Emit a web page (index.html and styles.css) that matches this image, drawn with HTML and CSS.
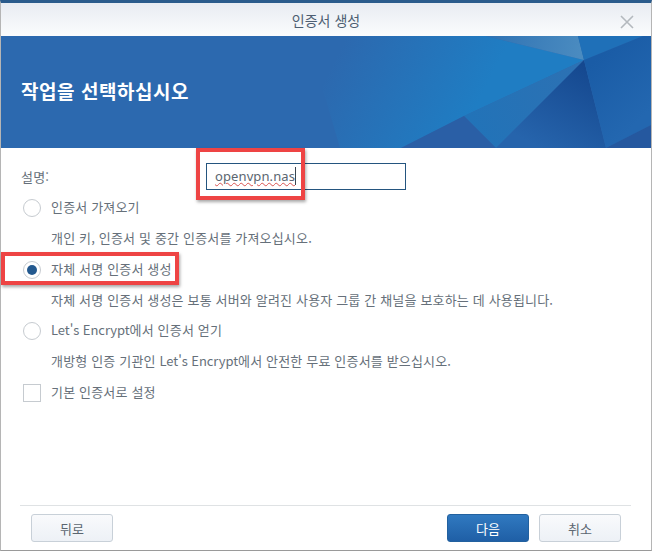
FILE: index.html
```html
<!DOCTYPE html>
<html lang="ko">
<head>
<meta charset="utf-8">
<title>인증서 생성</title>
<link rel="stylesheet" href="styles.css">
</head>
<body>
<div class="dialog">
  <header class="titlebar">
    <span class="title">인증서 생성</span>
    <svg class="close" width="14" height="14" viewBox="0 0 14 14"><path d="M1 1 L13 13 M13 1 L1 13" stroke="#b4b9be" stroke-width="1.6" fill="none"/></svg>
  </header>
  <section class="banner">
    <svg class="banner-art" width="650" height="112" viewBox="1 36 650 112" preserveAspectRatio="none">
      <defs>
        <linearGradient id="g1" gradientUnits="userSpaceOnUse" x1="340" y1="50" x2="470" y2="118"><stop offset="0" stop-color="#2c69af"/><stop offset="1" stop-color="#1f7dc3"/></linearGradient>
        <linearGradient id="g2" gradientUnits="userSpaceOnUse" x1="470" y1="120" x2="584" y2="60"><stop offset="0" stop-color="#2273b8"/><stop offset="1" stop-color="#2d71b3"/></linearGradient>
        <linearGradient id="g3" gradientUnits="userSpaceOnUse" x1="584" y1="65" x2="540" y2="148"><stop offset="0" stop-color="#15488f"/><stop offset="1" stop-color="#2664ac"/></linearGradient>
        <linearGradient id="g4" gradientUnits="userSpaceOnUse" x1="486" y1="36" x2="580" y2="50"><stop offset="0" stop-color="#2f72b3"/><stop offset="1" stop-color="#4a8bc0"/></linearGradient>
        <linearGradient id="g5" gradientUnits="userSpaceOnUse" x1="590" y1="65" x2="640" y2="120"><stop offset="0" stop-color="#1a5ca6"/><stop offset="1" stop-color="#2367b0"/></linearGradient>
      </defs>
      <rect x="0" y="36" width="651" height="112" fill="#2c69af"/>
      <polygon points="300,36 486,36 584,60 464,116 401,148 340,148 326,100" fill="url(#g1)"/>
      <polygon points="486,36 578,36 584,60" fill="url(#g4)"/>
      <polygon points="578,36 643,36 584,60" fill="#1f70b8"/>
      <polygon points="584,60 464,116 496,148" fill="url(#g2)"/>
      <polygon points="464,116 401,148 496,148" fill="#2a5fa6"/>
      <polygon points="584,60 496,148 606,148" fill="url(#g3)"/>
      <polygon points="584,60 643,36 651,36 651,125 606,148" fill="url(#g5)"/>
      <polygon points="651,125 606,148 651,148" fill="#25589f"/>
    </svg>
    <h1 class="banner-title">작업을 선택하십시오</h1>
  </section>
  <main class="content">
    <div class="row desc-row">
      <label class="desc-label">설명:</label>
      <div class="input"><span class="typed">openvpn.nas</span></div>
    </div>
    <div class="option opt-first"><span class="radio"></span><span class="opt-text">인증서 가져오기</span></div>
    <p class="hint">개인 키, 인증서 및 중간 인증서를 가져오십시오.</p>
    <div class="option"><span class="radio checked"></span><span class="opt-text">자체 서명 인증서 생성</span></div>
    <p class="hint">자체 서명 인증서 생성은 보통 서버와 알려진 사용자 그룹 간 채널을 보호하는 데 사용됩니다.</p>
    <div class="option"><span class="radio"></span><span class="opt-text"><span class="latin">Let's Encrypt</span>에서 인증서 얻기</span></div>
    <p class="hint">개방형 인증 기관인 <span class="latin">Let's Encrypt</span>에서 안전한 무료 인증서를 받으십시오.</p>
    <div class="option"><span class="check"></span><span class="opt-text">기본 인증서로 설정</span></div>
  </main>
  <footer class="footer">
    <button class="btn">뒤로</button>
    <span class="spacer"></span>
    <button class="btn primary">다음</button>
    <button class="btn">취소</button>
  </footer>
</div>
<div class="mark mark-input"></div>
<div class="mark mark-radio"></div>
</body>
</html>
```
FILE: styles.css
```css
* { box-sizing: border-box; }
html, body { margin: 0; padding: 0; background: #fff; }
body {
  width: 652px;
  height: 551px;
  position: relative;
  overflow: hidden;
  font-family: "Noto Sans CJK KR", "Noto Sans", sans-serif;
  color: #66707a;
}
.dialog {
  width: 652px;
  height: 551px;
  display: flex;
  flex-direction: column;
  border-top: 3px solid #2a5b8c;
  border-left: 1px solid #b5b5b5;
  border-right: 1px solid #b5b5b5;
  border-bottom: 1px solid #9a9a9a;
}
.titlebar {
  height: 33px;
  flex: none;
  display: flex;
  align-items: center;
  justify-content: center;
  position: relative;
  background: linear-gradient(#e8ecf2, #fbfcfd);
}
.title { font-size: 14px; color: #4d5e72; }
.close { position: absolute; right: 17px; top: 12px; }
.banner {
  height: 112px;
  flex: none;
  position: relative;
  display: flex;
  align-items: center;
  padding: 0 0 3px 20px;
  background: #2c69af;
}
.banner-art { position: absolute; left: 0; top: 0; }
.banner-title {
  position: relative;
  margin: 0;
  font-size: 19px;
  font-weight: 700;
  color: #fff;
  letter-spacing: .55px;
}
.content { flex: 1; padding: 15px 0 0 20px; font-size: 13px; letter-spacing: .17px; }
.row { display: flex; align-items: center; }
.desc-label { width: 185px; }
.input {
  width: 200px;
  height: 27px;
  border: 1px solid #24557f;
  padding-left: 8px;
  font-family: "Noto Sans", sans-serif;
  font-size: 13px;
  line-height: 25px;
  letter-spacing: .1px;
  color: #5b6670;
}
.typed {
  border-right: 1px solid #3a4550;
  text-decoration: underline wavy #d9534f 1px;
}
.option { display: flex; align-items: center; gap: 10px; height: 20px; margin: 0 0 0 2px; }
.opt-first { margin-top: 8px; }
.opt-text { padding-bottom: 3px; }
.latin { letter-spacing: -.06px; }
.radio {
  width: 18px;
  height: 18px;
  border-radius: 50%;
  border: 1px solid #c6cbd0;
  background: #fff;
  flex: none;
  display: flex;
  align-items: center;
  justify-content: center;
}
.radio.checked::after {
  content: "";
  width: 10px;
  height: 10px;
  border-radius: 50%;
  background: #23598f;
}
.check { width: 18px; height: 18px; border: 1px solid #c6cbd0; flex: none; }
.hint { margin: 10px 0 11.67px 30px; line-height: 20px; height: 20px; white-space: nowrap; }
.footer {
  flex: none;
  height: 45px;
  margin: 0 20px 0 19px;
  border-top: 1px solid #dfe2e4;
  padding: 8px 10px 0 11px;
  display: flex;
  align-items: flex-start;
  gap: 10px;
}
.spacer { flex: 1; }
.btn {
  width: 82px;
  height: 28px;
  border: 1px solid #c8d0d8;
  border-radius: 3px;
  background: linear-gradient(#f9fafc, #edf1f6);
  font-family: inherit;
  font-size: 13px;
  color: #5b6670;
  padding: 0;
}
.btn.primary {
  background: linear-gradient(#3079c0, #1f5fa6);
  border-color: #22619f;
  color: #fff;
}
.mark {
  position: absolute;
  border: 4px solid #ee4444;
  box-shadow: 1px 2px 3px rgba(0,0,0,.35);
}
.mark-input { left: 196px; top: 148px; width: 109px; height: 52px; }
.mark-radio { left: 1px; top: 252px; width: 178px; height: 33px; }
```
